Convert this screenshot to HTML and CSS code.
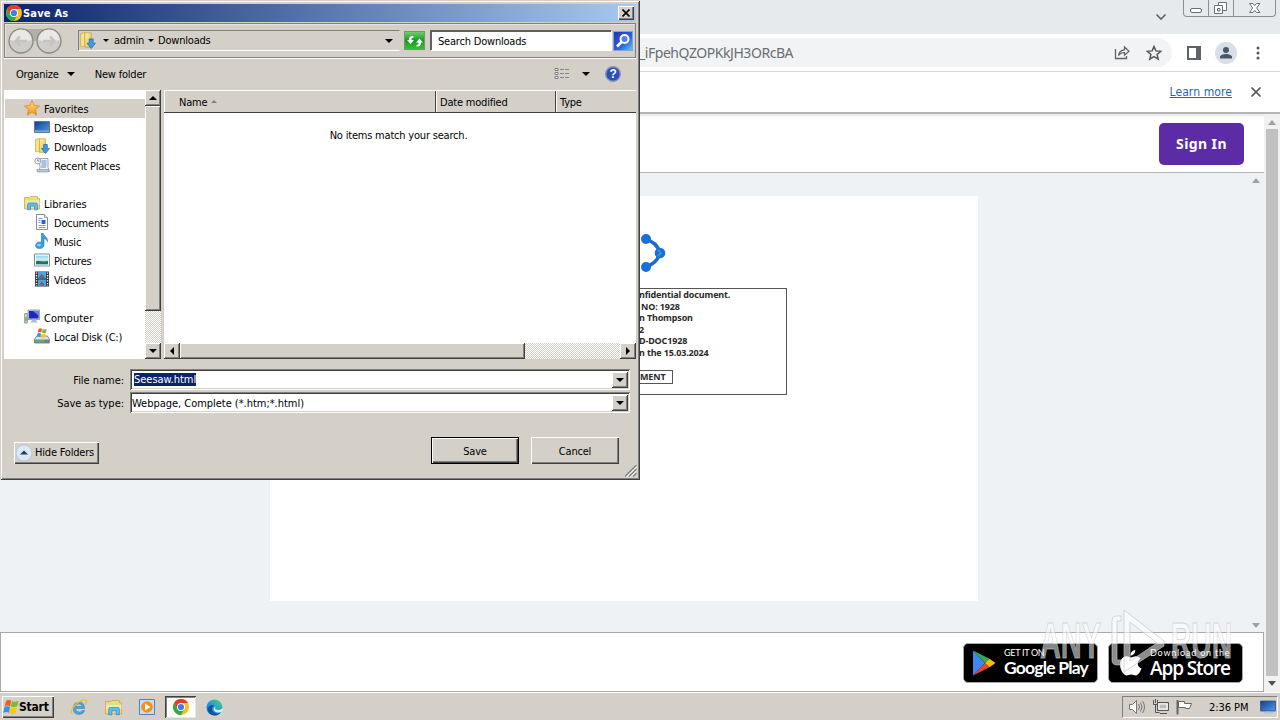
FILE: index.html
```html
<!doctype html>
<html lang="en">
<head>
    <meta charset="UTF-8">
    <meta name="viewport" content="width=device-width, initial-scale=1.0">
    <title>Seesaw</title>
    <link rel="stylesheet" href="styles.css">
</head>
<body>
    <!-- icons -->
    <svg class="sprite" width="0" height="0">
        <defs>
            <linearGradient id="g-folder" x1="0" y1="0" x2="1" y2="1"><stop offset="0" stop-color="#fdf3b4"/><stop offset="1" stop-color="#e2b93c"/></linearGradient>
            <linearGradient id="g-screen" x1="0" y1="0" x2="1" y2="1"><stop offset="0" stop-color="#123c8c"/><stop offset="1" stop-color="#4f9bf0"/></linearGradient>
            <linearGradient id="g-sky" x1="0" y1="0" x2="0" y2="1"><stop offset="0" stop-color="#8fd4f5"/><stop offset="0.5" stop-color="#d7f0e6"/><stop offset="1" stop-color="#1d6b62"/></linearGradient>
            <linearGradient id="g-star" x1="0" y1="0" x2="0" y2="1"><stop offset="0" stop-color="#ffe27a"/><stop offset="1" stop-color="#f0941c"/></linearGradient>
            <linearGradient id="g-edge" x1="0" y1="1" x2="1" y2="0"><stop offset="0" stop-color="#0b59b5"/><stop offset="0.5" stop-color="#1f9fe0"/><stop offset="1" stop-color="#5ad45a"/></linearGradient>
        </defs>
        <symbol id="chrome" viewBox="0 0 16 16">
            <circle cx="8" cy="8" r="8" fill="#fbc116"/>
            <path d="M1.07 4A8 8 0 0 0 8 16L11.46 10 8 8 4.5 10z" fill="#2da94f"/>
            <path d="M1.07 4A8 8 0 0 1 14.93 4H8L4.54 10z" fill="#e33b2e"/>
            <circle cx="8" cy="8" r="4" fill="#fff"/>
            <circle cx="8" cy="8" r="3.1" fill="#3f7ee8"/>
        </symbol>
        <symbol id="star" viewBox="0 0 16 16">
            <path d="M8 .6l2.200 4.900 5.300.6-4 3.600 1.100 5.300L8 12.300 3.400 15l1.100-5.300-4-3.600 5.300-.6z" fill="url(#g-star)" stroke="#d98a2b" stroke-width=".9"/>
        </symbol>
        <symbol id="desktop" viewBox="0 0 16 16">
            <path d="M.5 2.500h15v11H.5z" fill="url(#g-screen)" stroke="#5e7896"/>
            <path d="M1 11.500h14V13H1z" fill="#7ca6d6"/>
            <path d="M1 11.500h3V13H1z" fill="#5fc46a"/>
        </symbol>
        <symbol id="downloads" viewBox="0 0 16 16">
            <path d="M1.500 1.500l4-1v13.500l-4-.5z" fill="#f6e28e" stroke="#c9a743" stroke-width=".7"/>
            <path d="M5.500.8h6v14l-6-.5z" fill="url(#g-folder)" stroke="#c9a743" stroke-width=".7"/>
            <path d="M9.700 6.500h3.600v4h2.200l-4 5-4-5h2.200z" fill="#3c9be8" stroke="#1c68b4" stroke-width=".7"/>
        </symbol>
        <symbol id="recent" viewBox="0 0 16 16">
            <path d="M5 1.500h9v9l1.500 4H4.500l1.500-4z" fill="#eef4fa" stroke="#7d93a8" stroke-width=".8"/>
            <path d="M7.500 4h5M7.500 6h5M7.500 8h5M7 10h5" stroke="#5b8fc7"/>
            <path d="M3 12.500h11.500V15H3z" fill="#b9c7d4" stroke="#7d8e9c" stroke-width=".6"/>
            <circle cx="3.800" cy="4" r="3" fill="#f4f7fa" stroke="#8a98a8" stroke-width=".9"/>
            <path d="M3.800 2.200V4h1.500" fill="none" stroke="#555" stroke-width=".8"/>
        </symbol>
        <symbol id="library" viewBox="0 0 16 16">
            <path d="M.5 2.500h5l1-1h7v2h2V14H.5z" fill="#f5dc82" stroke="#c9a743" stroke-width=".8"/>
            <path d="M2 4h12v5H2z" fill="#c3e6a1"/>
            <path d="M1 5.500h14.500v4H1z" fill="#f7e8a6"/>
            <path d="M3.500 14.800V9.500q0-1.500 1.500-1.500h7q1.500 0 1.500 1.500v5.300h-3V11h-4v3.800z" fill="#62bdea" stroke="#2e89bb" stroke-width=".7"/>
        </symbol>
        <symbol id="document" viewBox="0 0 16 16">
            <path d="M2.500.5h8l3 3v12h-11z" fill="#fff" stroke="#7b8fa6"/>
            <path d="M10.500.5v3h3" fill="#dfe8f2" stroke="#7b8fa6" stroke-width=".8"/>
            <path d="M4.500 4.500h4M4.500 6.500h2M4.500 8.500h2M4.500 11.500h7M4.500 13.500h7" stroke="#7b9dc7"/>
            <path d="M7.500 6h4v4h-4z" fill="#2f68a8"/>
        </symbol>
        <symbol id="music" viewBox="0 0 16 16">
            <path d="M7.500.3h1.700c.3 2.600 4.800 3.700 4.300 8.200-.8-2-2-2.800-3.500-3v6.300c0 2-1.600 3.700-4.400 3.700-2.600 0-4-1.200-4-3 0-2.200 2.200-3.600 4.500-3.600.5 0 1 .1 1.400.3z" fill="#3c9fe2" stroke="#1d74b8" stroke-width=".6"/>
            <ellipse cx="5" cy="12" rx="2" ry="1.200" fill="#8ccdf5"/>
        </symbol>
        <symbol id="picture" viewBox="0 0 16 16">
            <path d="M.5 2h15v12H.5z" fill="#fff" stroke="#7690ab"/>
            <path d="M2 3.700h12v8.500H2z" fill="url(#g-sky)"/>
            <path d="M2 9.500c3-1.500 5 1 12-.5v3.200H2z" fill="#1e7368"/>
        </symbol>
        <symbol id="video" viewBox="0 0 16 16">
            <path d="M1 .5h14v15H1z" fill="#28323c"/>
            <path d="M4 1h8v6.500H4z" fill="#4aa6de"/><path d="M4 8.500h8V15H4z" fill="#4aa6de"/>
            <path d="M5 6.500l2.500-3.500L10 5l1 2H5zM5 14l2.500-3.500L10 12.500l1 2H5z" fill="#7d5a7c"/>
            <path d="M2.500 1.500V15M13.500 1.500V15" stroke="#fff" stroke-width="1.400" stroke-dasharray="1.300 1.300"/>
        </symbol>
        <symbol id="computer" viewBox="0 0 16 16">
            <path d="M.7 4.500h2.600v9.500H.7z" fill="#d6dfd0" stroke="#75846e" stroke-width=".8"/>
            <path d="M1.300 8h1.400v4H1.300z" fill="#5eb548"/>
            <path d="M4 1h11.500v9.500H4z" fill="#c4ccd8" stroke="#7c8795" stroke-width=".7"/>
            <path d="M5 2h9.500v7.500H5z" fill="#1d28c2"/><path d="M9 2h5.500v4.500z" fill="#6f88ee"/>
            <path d="M8 10.500h4l1.500 3H6.500z" fill="#b5bdc9"/>
        </symbol>
        <symbol id="flag" viewBox="0 0 16 16">
            <path d="M3 2Q5.500 0 8.200 1.600L7.200 7.200Q4.500 5.700 1.700 7.400z" fill="#ee5b23"/>
            <path d="M9 2Q11.500 3.400 15.500 1.800L14.200 7.300q-3.300 1.400-6.300.2z" fill="#7cbb2c"/>
            <path d="M1.500 8.200Q4.300 6.600 7 8l-1.100 5.700Q3.200 12.200.2 14z" fill="#3492e0"/>
            <path d="M7.700 8.400q3.200 1.300 6.300 0L12.900 14q-3.200 1.500-6.300.1z" fill="#fdc41b"/>
        </symbol>
        <symbol id="disk" viewBox="0 0 16 16">
            <path d="M2.500 8h11l2 3.500v3.500H.5v-3.500z" fill="#dde2e6" stroke="#6e7880" stroke-width=".8"/>
            <path d="M.7 11.500h14.600V15H.7z" fill="#74828e"/><path d="M1.500 12.300h9v1.500h-9z" fill="#5cc457"/>
            <path d="M4.500 1Q6.200-.2 8 .8L7.300 4.500Q5.500 3.500 3.700 4.700z" fill="#ee5b23"/>
            <path d="M8.700 1Q10.500 2 12.800.9l-.9 3.800q-2 1-3.900.1z" fill="#7cbb2c"/>
            <path d="M3.500 5.500Q5.300 4.500 7 5.400L6.300 9Q4.500 8 2.700 9z" fill="#3492e0"/>
            <path d="M7.800 5.600q2 1 3.900 0L10.900 9.300q-2 1-3.900.1z" fill="#fdc41b"/>
        </symbol>
        <symbol id="monitor" viewBox="0 0 16 16">
            <path d="M.5 2h15v10H.5z" fill="url(#g-screen)" stroke="#35527c" stroke-width=".8"/>
            <path d="M4 13.500q4-2 9 0v1H4z" fill="#a9c0da"/>
        </symbol>
    </svg>

    <div class="screen">
        <div class="browser">
            <div class="tab-strip">
                <svg class="tab-search" width="12" height="8" viewBox="0 0 12 8"><path d="M1.500 1.500L6 6l4.500-4.500" fill="none" stroke="#5f6368" stroke-width="1.600"/></svg>
                <div class="win-controls">
                    <span><svg width="25" height="16" viewBox="0 0 25 16"><rect x="6.500" y="8.500" width="11" height="4" rx="1.500" fill="#fff" stroke="#6b6f75"/></svg></span>
                    <span><svg width="24" height="16" viewBox="0 0 24 16"><path d="M9.500 2.500h8v8h-8z" fill="#fff" stroke="#6b6f75"/><path d="M5.500 5.500h8v8h-8z" fill="#fff" stroke="#6b6f75"/><path d="M8.500 8.500h2.500v2.500H8.500z" fill="none" stroke="#6b6f75"/></svg></span>
                    <span class="wide"><svg width="42" height="16" viewBox="0 0 42 16"><path d="M15.500 3.500h3.500l1.700 2.200 1.700-2.200h3.500l-3.200 4.500 3.200 4.500h-3.500l-1.700-2.200-1.700 2.200h-3.500l3.200-4.500z" fill="#fff" stroke="#6b6f75"/></svg></span>
                </div>
            </div>
            <div class="toolbar">
                <div class="omnibox">
                    <span class="url">_iFpehQZOPKkJH3ORcBA</span>
                    <svg class="share" width="18" height="16" viewBox="0 0 18 16"><path d="M2.500 4v9.500h11V11" fill="none" stroke="#5f6368" stroke-width="1.300"/><path d="M5.500 10.500c.5-4 3-5.500 6-5.700V2l4.500 4.200-4.500 4V7.500c-2.800 0-4.500.8-6 3z" fill="none" stroke="#5f6368" stroke-width="1.200"/></svg>
                    <svg class="bookmark" width="16" height="16" viewBox="0 0 16 16"><path d="M8 1.500l1.900 4.400 4.800.4-3.600 3.200 1.100 4.700L8 11.700l-4.200 2.500 1.100-4.700L1.300 6.300l4.800-.4z" fill="none" stroke="#54585d" stroke-width="1.500"/></svg>
                </div>
                <svg class="side-panel" width="14" height="14" viewBox="0 0 14 14"><path d="M1 1h12v12H1z" fill="#fff" stroke="#5f6368" stroke-width="2"/><path d="M9 0h5v14H9z" fill="#5f6368"/></svg>
                <span class="avatar"><svg width="14" height="14" viewBox="0 0 14 14"><circle cx="7" cy="4" r="3" fill="#4a5568"/><path d="M1 12.500V11c0-2 3.500-3 6-3s6 1 6 3v1.500z" fill="#4a5568"/></svg></span>
                <svg class="kebab" width="4" height="14" viewBox="0 0 4 14" fill="#54585d"><circle cx="2" cy="2" r="1.500"/><circle cx="2" cy="7" r="1.500"/><circle cx="2" cy="12" r="1.500"/></svg>
            </div>
            <div class="info-bar">
                <a href="#">Learn more</a>
                <svg width="12" height="12" viewBox="0 0 12 12"><path d="M1.500 1.500l9 9M10.500 1.500l-9 9" stroke="#54585d" stroke-width="1.700"/></svg>
            </div>

            <div class="viewport">
                <div class="page">
                    <header><button class="sign-in">Sign In</button></header>
                    <div class="viewer">
                        <div class="sheet">
                            <svg class="share-logo" width="56" height="42" viewBox="0 0 56 42">
                                <path d="M31 7q12 3 15 14q-3 11-15 14" fill="none" stroke="#1a6ad0" stroke-width="3.500"/>
                                <g fill="#1a6fd8"><circle cx="32" cy="7" r="5"/><circle cx="32" cy="35" r="5"/><circle cx="46" cy="21" r="5.300"/></g>
                                <path d="M44 18l3 3-3 3" fill="none" stroke="#4f97ea" stroke-width="1.200"/>
                            </svg>
                            <div class="notice">
                                <p>nfidential document.</p>
                                <p class="in">NO: 1928</p>
                                <p>n Thompson</p>
                                <p>2</p>
                                <p>D-DOC1928</p>
                                <p>n the 15.03.2024</p>
                                <span class="doc-btn">MENT</span>
                            </div>
                        </div>
                        <div class="inner-scroll"><i class="up"></i><i class="down"></i></div>
                    </div>
                    <footer>
                        <div class="badge">
                            <svg width="24" height="28" viewBox="0 0 24 28"><path d="M1 1.500v25L13 14z" fill="#4285f4"/><path d="M1 1.500L13 14l4.500-4.200z" fill="#34a853"/><path d="M1 26.500L13 14l4.500 4.300z" fill="#ea4335"/><path d="M17.500 9.800L23.500 14l-6 4.300L13 14z" fill="#fbbc04"/></svg>
                            <p><small>GET IT ON</small><b>Google Play</b></p>
                        </div>
                        <div class="badge apple">
                            <svg width="22" height="27" viewBox="0 0 22 27" fill="#fff"><path d="M15.300 0c.2 3-2.200 5.600-4.900 5.500C10.200 2.700 12.700.2 15.300 0z"/><path d="M11 7.500c1.100 0 2.600-1.300 4.900-1.300 1.800 0 3.700 1 4.700 2.500-4.200 2.500-3.500 8.200.9 9.800-1 3-3.400 7-5.700 7-1.600 0-2.500-1-4.500-1s-3 1-4.500 1C3.500 25.500 0 19.500 0 14.500 0 9.300 3.200 6.300 6.400 6.300c2.100 0 3.500 1.200 4.600 1.200z"/></svg>
                            <p><small>Download on the</small><b>App Store</b></p>
                        </div>
                    </footer>
                </div>
                <div class="outer-scroll"><i class="up"></i><span class="thumb"></span><i class="down"></i></div>
            </div>
        </div>

        <div class="taskbar">
            <button class="start"><svg width="16" height="16"><use href="#flag"/></svg>Start</button>
            <div class="quick">
                <span><svg width="18" height="18" viewBox="0 0 18 18"><path d="M14.500 10.500H5.500q.3 3.500 3.800 3.500 2.300 0 3-1.600h2.400q-1.300 4-5.600 4-5.900 0-5.900-6.200 0-6 6-6 5.500 0 5.300 6.300zM5.600 8.500h6.600q-.3-2.600-3.200-2.600t-3.400 2.600z" fill="#42a8e4" stroke="#2679b7" stroke-width=".5"/><path d="M2 15.500C-1 12 9 1 16 2c1.500 1 0 3.300-.8 4" fill="none" stroke="#eec02e" stroke-width="1.400"/></svg></span>
                <span><svg width="17" height="17"><use href="#library"/></svg></span>
                <span><svg width="16" height="16" viewBox="0 0 16 16"><path d="M.5.5h15v15H.5z" fill="#c6def2" stroke="#4a86bd"/><circle cx="8" cy="8" r="5.800" fill="#f38f1d"/><path d="M6 4.500L11.500 8 6 11.500z" fill="#fff"/></svg></span>
                <span class="active"><svg width="16" height="16"><use href="#chrome"/></svg></span>
                <span><svg width="17" height="17" viewBox="0 0 17 17"><circle cx="8.500" cy="8.500" r="8" fill="url(#g-edge)"/><path d="M7 7.500c-2 2-1 6 3 7 2 .5 4-.3 5-1.500-2 4-8 4.500-11 1.500-3.500-3-2-7.500 1.500-8.500 1-.3 2 0 2.500.5z" fill="#1550a0"/><path d="M9.500 7.500c.6 1-.8 1.500-.5 2.300.7 1.300 4 1.800 7 .2l1-.5v1.500l-1.500 2c-3 1-8.500.5-8-3.500z" fill="#e0ebef"/></svg></span>
            </div>
            <div class="tray">
                <svg width="18" height="16" viewBox="0 0 18 16"><path d="M1.500 5.500h3l4-4v13l-4-4h-3z" fill="#fff" stroke="#777"/><path d="M10.500 5q2 3 0 6M12.500 3.500q3 4.500 0 9M14.500 2q4 6 0 12" fill="none" stroke="#777"/></svg>
                <svg width="18" height="16" viewBox="0 0 18 16"><path d="M5.500 3.500h11v8h-11z" fill="#d4d0c8" stroke="#555"/><path d="M7 5h8v5H7z" fill="#bbb" stroke="#fff"/><path d="M8 14.500h7" stroke="#555"/><path d="M1.500 1v4.500h4V1M3.500 0v4M3.500 6v7.500h4" fill="none" stroke="#555"/></svg>
                <svg width="18" height="16" viewBox="0 0 18 16"><path d="M1.500 1v14.500" stroke="#666" stroke-width="2"/><path d="M2.500 2.500h6v2h7l-2 5h-4v-1h-7z" fill="#fff" stroke="#666"/></svg>
                <time>2:36 PM</time>
                <svg class="show-desktop" width="16" height="16"><use href="#monitor"/></svg>
            </div>
        </div>

        <div class="dialog">
            <div class="title-bar">
                <svg width="16" height="16"><use href="#chrome"/></svg>
                <h1>Save As</h1>
                <button class="close"><svg width="8" height="8" viewBox="0 0 8 8"><path d="M.5.5l7 7M7.500.5l-7 7" stroke="#000" stroke-width="1.600"/></svg></button>
            </div>
            <div class="nav-bar">
                <div class="arrows">
                    <svg width="54" height="26" viewBox="0 0 54 26">
                        <path d="M13 1h28v12H13z" fill="#b2afaa"/>
                        <g fill="#cfcdc9" stroke="#8c8a87" stroke-width="1.300"><circle cx="13" cy="13" r="12"/><circle cx="41" cy="13" r="12"/></g>
                        <path d="M2.500 12a10.500 10.500 0 0 1 21 0q-10 3-21 0zM30.500 12a10.500 10.500 0 0 1 21 0q-10 3-21 0z" fill="#e9e8e6"/>
                        <path d="M19 13H8M12 8.500L7.500 13l4.500 4.500M35 13h11M42 8.500l4.500 4.500-4.500 4.500" fill="none" stroke="#c6c3bf" stroke-width="2.500"/>
                    </svg>
                </div>
                <div class="address">
                    <svg width="17" height="17"><use href="#downloads"/></svg>
                    <i class="caret small"></i><span>admin</span><i class="caret small"></i><span>Downloads</span>
                    <i class="caret end"></i>
                </div>
                <span class="refresh"><svg width="16" height="14" viewBox="0 0 16 14" fill="#fff"><path d="M6.500 2v1.500C4.800 3.500 4.500 4.500 4.500 6H7L3.500 10 0 6h2c0-3 1.500-4.500 4.500-4z"/><path d="M9.500 12.500V11c1.700 0 2-1 2-2.500H9L12.500 4.500 16 8.500h-2c0 3-1.500 4.500-4.500 4z"/></svg></span>
                <div class="search">Search Downloads</div>
                <span class="search-btn"><svg width="16" height="16" viewBox="0 0 16 16"><circle cx="9.500" cy="6" r="4" fill="#4d83ea" stroke="#fff" stroke-width="2"/><path d="M6.500 9L2 13.500" stroke="#fff" stroke-width="2.600"/></svg></span>
            </div>
            <div class="commands">
                <span>Organize</span><i class="caret"></i><span class="new-folder">New folder</span>
                <svg class="view" width="16" height="12" viewBox="0 0 16 12"><path d="M1 .5h3v2H1zM1 4.500h3v2H1zM1 8.500h3v2H1z" fill="#fff" stroke="#7d8186"/><path d="M6 1.500h4M11 1.500h4M6 5.500h4M11 5.500h4M6 9.500h4M11 9.500h4" stroke="#7c8695"/></svg>
                <i class="caret view-caret"></i>
                <svg class="help" width="16" height="16" viewBox="0 0 16 16"><circle cx="8" cy="8" r="7.300" fill="#2d50b4" stroke="#8596bd" stroke-width="1.400"/><text x="8" y="12.200" text-anchor="middle">?</text></svg>
            </div>
            <div class="panes">
                <ul class="tree">
                    <li class="group selected"><svg width="16" height="16"><use href="#star"/></svg>Favorites</li>
                    <li><svg width="16" height="16"><use href="#desktop"/></svg>Desktop</li>
                    <li><svg width="16" height="16"><use href="#downloads"/></svg>Downloads</li>
                    <li><svg width="16" height="16"><use href="#recent"/></svg>Recent Places</li>
                    <li class="blank"></li>
                    <li class="group"><svg width="16" height="16"><use href="#library"/></svg>Libraries</li>
                    <li><svg width="16" height="16"><use href="#document"/></svg>Documents</li>
                    <li><svg width="16" height="16"><use href="#music"/></svg>Music</li>
                    <li><svg width="16" height="16"><use href="#picture"/></svg>Pictures</li>
                    <li><svg width="16" height="16"><use href="#video"/></svg>Videos</li>
                    <li class="blank"></li>
                    <li class="group"><svg width="16" height="16"><use href="#computer"/></svg>Computer</li>
                    <li><svg width="16" height="16"><use href="#disk"/></svg>Local Disk (C:)</li>
                </ul>
                <div class="v-scroll"><b class="sb"><i class="tri-up"></i></b><b class="thumb"></b><b class="sb last"><i class="tri-down"></i></b></div>
                <div class="files">
                    <div class="columns"><span class="name">Name <i class="sort"></i></span><span class="date">Date modified</span><span class="type">Type</span></div>
                    <p class="empty">No items match your search.</p>
                    <div class="h-scroll"><b class="sb"><i class="tri-left"></i></b><b class="thumb"></b><b class="sb last"><i class="tri-right"></i></b></div>
                </div>
            </div>
            <div class="fields">
                <label>File name:</label><div class="combo"><span class="marked">Seesaw.html</span><b class="sb"><i class="tri-down"></i></b></div>
                <label>Save as type:</label><div class="combo"><span>Webpage, Complete (*.htm;*.html)</span><b class="sb"><i class="tri-down"></i></b></div>
            </div>
            <div class="actions">
                <button class="hide-folders"><svg width="18" height="18" viewBox="0 0 18 18"><circle cx="9" cy="9" r="8" fill="#dbe8f5" stroke="#b5c9de"/><path d="M5 10.500L9 6.500l4 4z" fill="#223a5c"/></svg>Hide Folders</button>
                <button class="save">Save</button>
                <button class="cancel">Cancel</button>
            </div>
            <svg class="grip" width="12" height="12" viewBox="0 0 12 12"><path d="M0 11.500L11.500 0M4 11.500L11.500 4M8 11.500L11.500 8" stroke="#808080" stroke-width="1.400"/><path d="M1.500 12L12 1.500M5.500 12L12 5.500" stroke="#fff"/></svg>
        </div>

        <svg class="watermark" width="196" height="70" viewBox="0 0 196 70">
            <text x="1" y="50" textLength="61" lengthAdjust="spacingAndGlyphs">ANY</text>
            <text x="132" y="50" textLength="61" lengthAdjust="spacingAndGlyphs">RUN</text>
            <path d="M82 8h-4q-5 0-5 5v39q0 5 5 5h4v-5h-4V13h4z"/>
            <path d="M85 2l40 31v5L85 64zM91 14v39l27-18z" fill-rule="evenodd"/>
        </svg>
    </div>
</body>
</html>
```
FILE: styles.css
```css
* {
    margin: 0;
    padding: 0;
    box-sizing: border-box;
}

body {
    overflow: hidden;
    font: 11px "DejaVu Sans Condensed", "DejaVu Sans", sans-serif;
    font-stretch: condensed;
    letter-spacing: -0.2px;
    color: #000;
}

button {
    font: inherit;
    letter-spacing: inherit;
    border: none;
}

li {
    list-style: none;
}

svg {
    display: block;
    flex: none;
}

.sprite {
    position: absolute;
}

.screen {
    position: relative;
    display: flex;
    flex-direction: column;
    width: 1280px;
    height: 720px;
    overflow: hidden;
}

/* browser */
.browser {
    display: flex;
    flex-direction: column;
    height: 692px;
    background: #fff;
}

.tab-strip {
    display: flex;
    justify-content: flex-end;
    height: 34px;
    background: #e7eaed;
}

.tab-search {
    margin: 13px 16px 0 0;
}

.win-controls {
    display: flex;
    width: 93px;
    height: 17px;
    margin-right: 4px;
    border: 1px solid #8b8f94;
    border-top: none;
    border-radius: 0 0 4px 4px;
}

.win-controls span {
    width: 25px;
    border-right: 1px solid #8b8f94;
}

.win-controls .wide {
    width: 42px;
    border: none;
}

.toolbar {
    display: flex;
    align-items: center;
    height: 38px;
    padding-right: 20px;
    border-bottom: 1px solid #d5d7da;
}

.omnibox {
    display: flex;
    align-items: center;
    width: 1172px;
    height: 29px;
    padding: 0 10px 0 639px;
    border-radius: 0 15px 15px 0;
    background: #f1f3f4;
}

.url {
    flex: 1;
    font: 14px "Noto Sans", sans-serif;
    letter-spacing: -0.45px;
    color: #6a6e73;
}

.share {
    margin-right: 15px;
}

.side-panel {
    margin-left: 15px;
}

.avatar {
    display: flex;
    align-items: center;
    justify-content: center;
    width: 22px;
    height: 22px;
    margin-left: 14px;
    border-radius: 50%;
    background: #d9dfe6;
}

.kebab {
    margin-left: auto;
}

.info-bar {
    display: flex;
    align-items: center;
    justify-content: flex-end;
    gap: 18px;
    height: 42px;
    padding: 0 18px 1px 0;
    border-bottom: 2px solid #b4b5b6;
}

.info-bar a {
    font: 12px "DejaVu Sans Condensed", "DejaVu Sans", sans-serif;
    letter-spacing: 0.1px;
    color: #1f67b5;
}

.viewport {
    display: flex;
    flex: 1;
}

.page {
    display: flex;
    flex-direction: column;
    width: 1264px;
}

.page header {
    display: flex;
    justify-content: flex-end;
    height: 59px;
    padding: 9px 20px 0 0;
    border-bottom: 1px solid #b3b3b3;
    background: linear-gradient(#e8e8e8, #fff 4px);
}

.sign-in {
    width: 85px;
    height: 42px;
    padding-bottom: 1px;
    border-radius: 5px;
    background: #5c2ba6;
    color: #fff;
    font: bold 14px "Noto Sans", sans-serif;
    letter-spacing: 0.4px;
}

.viewer {
    display: flex;
    justify-content: flex-end;
    height: 459px;
    padding-top: 23px;
    background: #eff2f5;
}

.sheet {
    width: 708px;
    height: 405px;
    padding-top: 36px;
    background: #fff;
}

.share-logo {
    margin-left: 344px;
}

.notice {
    width: 326px;
    height: 107px;
    margin: 14px 0 0 191px;
    padding: 0 0 0 177px;
    border: 1px solid #555;
    color: #2b2b2b;
    font: bold 9px/11.500px "Noto Sans", sans-serif;
    letter-spacing: -0.15px;
    white-space: nowrap;
}

.notice .in {
    padding-left: 2px;
}

.doc-btn {
    display: block;
    width: 34px;
    height: 14px;
    margin-top: 12px;
    border: 1px solid #555;
    line-height: 12px;
}

.up,
.down {
    width: 0;
    height: 0;
    border: 4px solid transparent;
    border-top: none;
    border-bottom: 5px solid #a0a0a0;
}

.down {
    border-bottom: none;
    border-top: 5px solid #a0a0a0;
}

.inner-scroll {
    display: flex;
    flex-direction: column;
    justify-content: space-between;
    align-items: center;
    width: 16px;
    margin: -18px 0 4px 270px;
}

.page footer {
    display: flex;
    gap: 10px;
    justify-content: flex-end;
    height: 60px;
    padding: 10px 20px 0 0;
    border: 1px solid #aaa;
    background: #fff;
}

.badge {
    display: flex;
    align-items: center;
    width: 135px;
    height: 40px;
    padding-left: 8px;
    border: 1px solid #a6a6a6;
    border-radius: 5px;
    background: #000;
    color: #fff;
    letter-spacing: 0;
    white-space: nowrap;
}

.badge p {
    margin: -3px 0 0 8px;
}

.badge small {
    display: block;
    font: 9px/12px "Lato", sans-serif;
    letter-spacing: -0.3px;
}

.badge b {
    display: block;
    font: bold 17.500px/18px "Lato", sans-serif;
    letter-spacing: -0.8px;
}

.badge.apple {
    padding-left: 11px;
}

.apple small {
    letter-spacing: 0.8px;
}

.apple b {
    font: 600 19px/18px "Open Sans", sans-serif;
    letter-spacing: -1.1px;
}

.outer-scroll {
    display: flex;
    flex-direction: column;
    align-items: center;
    width: 16px;
    padding: 6px 0 6px;
    background: #f1f1f1;
}

.outer-scroll .thumb {
    width: 12px;
    height: 547px;
    margin-top: 4px;
    background: #c1c1c1;
}

.outer-scroll .down {
    margin-top: auto;
    border-top-color: #505050;
}

/* taskbar */
.taskbar {
    display: flex;
    align-items: center;
    height: 28px;
    padding: 1px 2px 0;
    border-top: 1px solid #fff;
    background: #d4d0c8;
}

.start {
    display: flex;
    align-items: center;
    width: 52px;
    height: 22px;
    padding-left: 1px;
    background: #d4d0c8;
    box-shadow: inset 1px 1px #fff, inset -1px -1px #404040, inset -2px -2px #808080;
    font-weight: bold;
    font-size: 12px;
    letter-spacing: -0.2px;
}

.quick {
    display: flex;
    margin-left: 8px;
}

.quick span {
    display: flex;
    align-items: center;
    justify-content: center;
    width: 34px;
    height: 22px;
}

.quick .active {
    width: 31px;
    margin: 0 1px 0 1px;
    background: #fff;
    box-shadow: inset 1px 1px #404040, inset -1px -1px #e8e6e1, inset 2px 2px #808080;
}

.tray {
    display: flex;
    align-items: center;
    gap: 6px;
    width: 156px;
    height: 22px;
    margin-left: auto;
    padding-left: 5px;
    border: 1px solid #808080;
    border-color: #808080 #fff #fff #808080;
}

.tray time {
    margin-left: 9px;
    letter-spacing: -0.05px;
}

.show-desktop {
    margin: 0 1px 0 auto;
}

/* save dialog */
.dialog {
    position: absolute;
    left: 0;
    top: 0;
    width: 640px;
    height: 480px;
    padding: 4px 4px 0;
    background: #d4d0c8;
    box-shadow: inset 1px 1px #d4d0c8, inset -1px -1px #404040, inset 2px 2px #fff, inset -2px -2px #808080;
}

.title-bar {
    display: flex;
    align-items: center;
    height: 18px;
    padding: 0 2px;
    background: linear-gradient(to right, #0a246a, #a6caf0);
    color: #fff;
}

.title-bar h1 {
    flex: 1;
    margin-left: 1px;
    font-size: 11px;
    letter-spacing: 0.2px;
}

.close {
    display: flex;
    align-items: center;
    justify-content: center;
    width: 16px;
    height: 14px;
    background: #d4d0c8;
    box-shadow: inset 1px 1px #fff, inset -1px -1px #404040, inset -2px -2px #808080;
}

.nav-bar {
    display: flex;
    align-items: center;
    height: 35px;
    margin-top: 1px;
    padding: 0 1px 0 3px;
    border: 1px solid #808080;
    box-shadow: 0 1px #fff, inset 1px 1px #e6e3de;
}

.address {
    display: flex;
    align-items: center;
    width: 322px;
    height: 21px;
    margin-left: 16px;
    padding-right: 6px;
    border: 1px solid #808080;
    border-color: #808080 #d4d0c8 #fff #808080;
}

.caret {
    border: 4px solid transparent;
    border-top-color: #000;
    border-bottom: none;
}

.caret.small {
    margin: 0 5px 0 7px;
    border-width: 3px 3px 0;
}

.caret.small + span + .small {
    margin: 0 4px;
}

.caret.end {
    margin-left: auto;
}

.refresh {
    display: flex;
    align-items: center;
    justify-content: center;
    width: 21px;
    height: 19px;
    margin-left: 4px;
    border: 1px solid #6b9c6b;
    background: linear-gradient(#6fce6f, #18981c 50%, #35c03a);
}

.search {
    width: 182px;
    height: 21px;
    margin-left: 5px;
    padding-left: 7px;
    border: 1px solid #808080;
    border-color: #606060 #fff #fff #606060;
    background: #fff;
    line-height: 21px;
    box-shadow: inset 1px 1px #606060;
}

.search-btn {
    display: flex;
    align-items: center;
    justify-content: center;
    width: 20px;
    height: 20px;
    margin-left: 1px;
    border: 1px solid #7ca5d8;
    background: linear-gradient(135deg, #1c36b8, #2f62dc 60%, #5cc6f5);
}

.commands {
    display: flex;
    align-items: center;
    height: 32px;
    padding: 0 15px 0 12px;
}

.commands .caret {
    margin-left: 8px;
}

.new-folder {
    margin-left: 20px;
}

.view {
    margin-left: auto;
}

.commands .view-caret {
    margin: 0 15px 0 12px;
}

.help text {
    font: bold 12px "Liberation Sans", sans-serif;
    fill: #fff;
}

.panes {
    display: flex;
    height: 269px;
}

.tree {
    width: 141px;
    padding-top: 9px;
    background: #fff;
}

.tree li {
    display: flex;
    gap: 4px;
    height: 19px;
    padding-left: 30px;
    line-height: 21px;
}

.tree svg {
    margin-top: 1px;
}

.tree .group {
    padding-left: 20px;
    letter-spacing: 0;
}

.tree .selected {
    margin-left: 1px;
    padding-left: 19px;
    background: #d4d0c8;
}

/* classic raised parts */
.sb,
.v-scroll .thumb,
.h-scroll .thumb {
    display: flex;
    align-items: center;
    justify-content: center;
    width: 16px;
    height: 16px;
    background: #d4d0c8;
    box-shadow: inset -1px -1px #404040, inset 1px 1px #fff, inset -2px -2px #808080;
}

.sb.last {
    margin: auto 0 0;
}

.tri-up,
.tri-down {
    border: 4px solid transparent;
    border-top: none;
    border-bottom-color: #000;
}

.tri-down {
    border-top: 4px solid #000;
    border-bottom: none;
}

.tri-left,
.tri-right {
    border: 4px solid transparent;
    border-left: none;
    border-right-color: #000;
}

.tri-right {
    border-left: 4px solid #000;
    border-right: none;
}

.v-scroll {
    display: flex;
    flex-direction: column;
    width: 16px;
    margin-right: 3px;
    background: repeating-conic-gradient(#fff 0 25%, #d4d0c8 0 50%) 0 0 / 2px 2px;
}

.v-scroll .thumb {
    height: 205px;
}

.files {
    display: flex;
    flex-direction: column;
    width: 472px;
    background: #fff;
}

.columns {
    display: flex;
    height: 23px;
    border-top: 1px solid #fff;
    border-bottom: 1px solid #404040;
    background: #d4d0c8;
    line-height: 23px;
}

.columns span {
    padding-left: 3px;
    border-left: 1px solid #fff;
    border-right: 1px solid #404040;
}

.columns .name {
    width: 272px;
    padding-left: 14px;
}

.columns .date {
    width: 120px;
}

.columns .type {
    flex: 1;
    border-right: none;
}

.sort {
    display: inline-block;
    margin-left: 1px;
    border: 3px solid transparent;
    border-top: none;
    border-bottom-color: #808080;
    vertical-align: 3px;
}

.empty {
    flex: 1;
    padding-top: 16px;
    padding-right: 3px;
    text-align: center;
}

.h-scroll {
    display: flex;
    height: 16px;
    background: repeating-conic-gradient(#fff 0 25%, #d4d0c8 0 50%) 0 0 / 2px 2px;
}

.h-scroll .thumb {
    width: 345px;
}

.h-scroll .last {
    margin: 0 0 0 auto;
}

.fields {
    display: grid;
    grid-template-columns: 120px 500px;
    gap: 2px 6px;
    padding-top: 10px;
    align-items: center;
    letter-spacing: -0.03px;
}

.fields label {
    padding-top: 1px;
    text-align: right;
}

.combo {
    display: flex;
    align-items: center;
    justify-content: space-between;
    height: 21px;
    padding: 2px;
    background: #fff;
    box-shadow: inset 1px 1px #808080, inset -1px -1px #fff, inset 2px 2px #404040, inset -2px -2px #d4d0c8;
}

.combo span {
    padding-top: 1px;
}

.combo .marked {
    margin-left: 2px;
    padding: 0;
    background: #0a246a;
    color: #fff;
}

.actions {
    display: flex;
    align-items: flex-start;
    padding: 24px 0 0 10px;
}

.actions button {
    width: 88px;
    height: 27px;
    padding-top: 1px;
    background: #d4d0c8;
    box-shadow: inset 1px 1px #fff, inset -1px -1px #404040, inset -2px -2px #808080;
}

.actions .hide-folders {
    display: flex;
    align-items: center;
    gap: 2px;
    width: 85px;
    height: 22px;
    margin-top: 5px;
    padding: 0 0 0 1px;
    line-height: 18px;
}

.actions .save {
    margin: 0 12px 0 332px;
    border: 1px solid #000;
}

.grip {
    position: absolute;
    right: 3px;
    bottom: 3px;
}

/* watermark over the page */
.watermark {
    position: absolute;
    left: 1039px;
    top: 608px;
    fill: rgba(255, 255, 255, 0.55);
    stroke: rgba(190, 194, 198, 0.65);
}

.watermark text {
    font: bold 50px "Liberation Sans", sans-serif;
    letter-spacing: 0;
}
```
